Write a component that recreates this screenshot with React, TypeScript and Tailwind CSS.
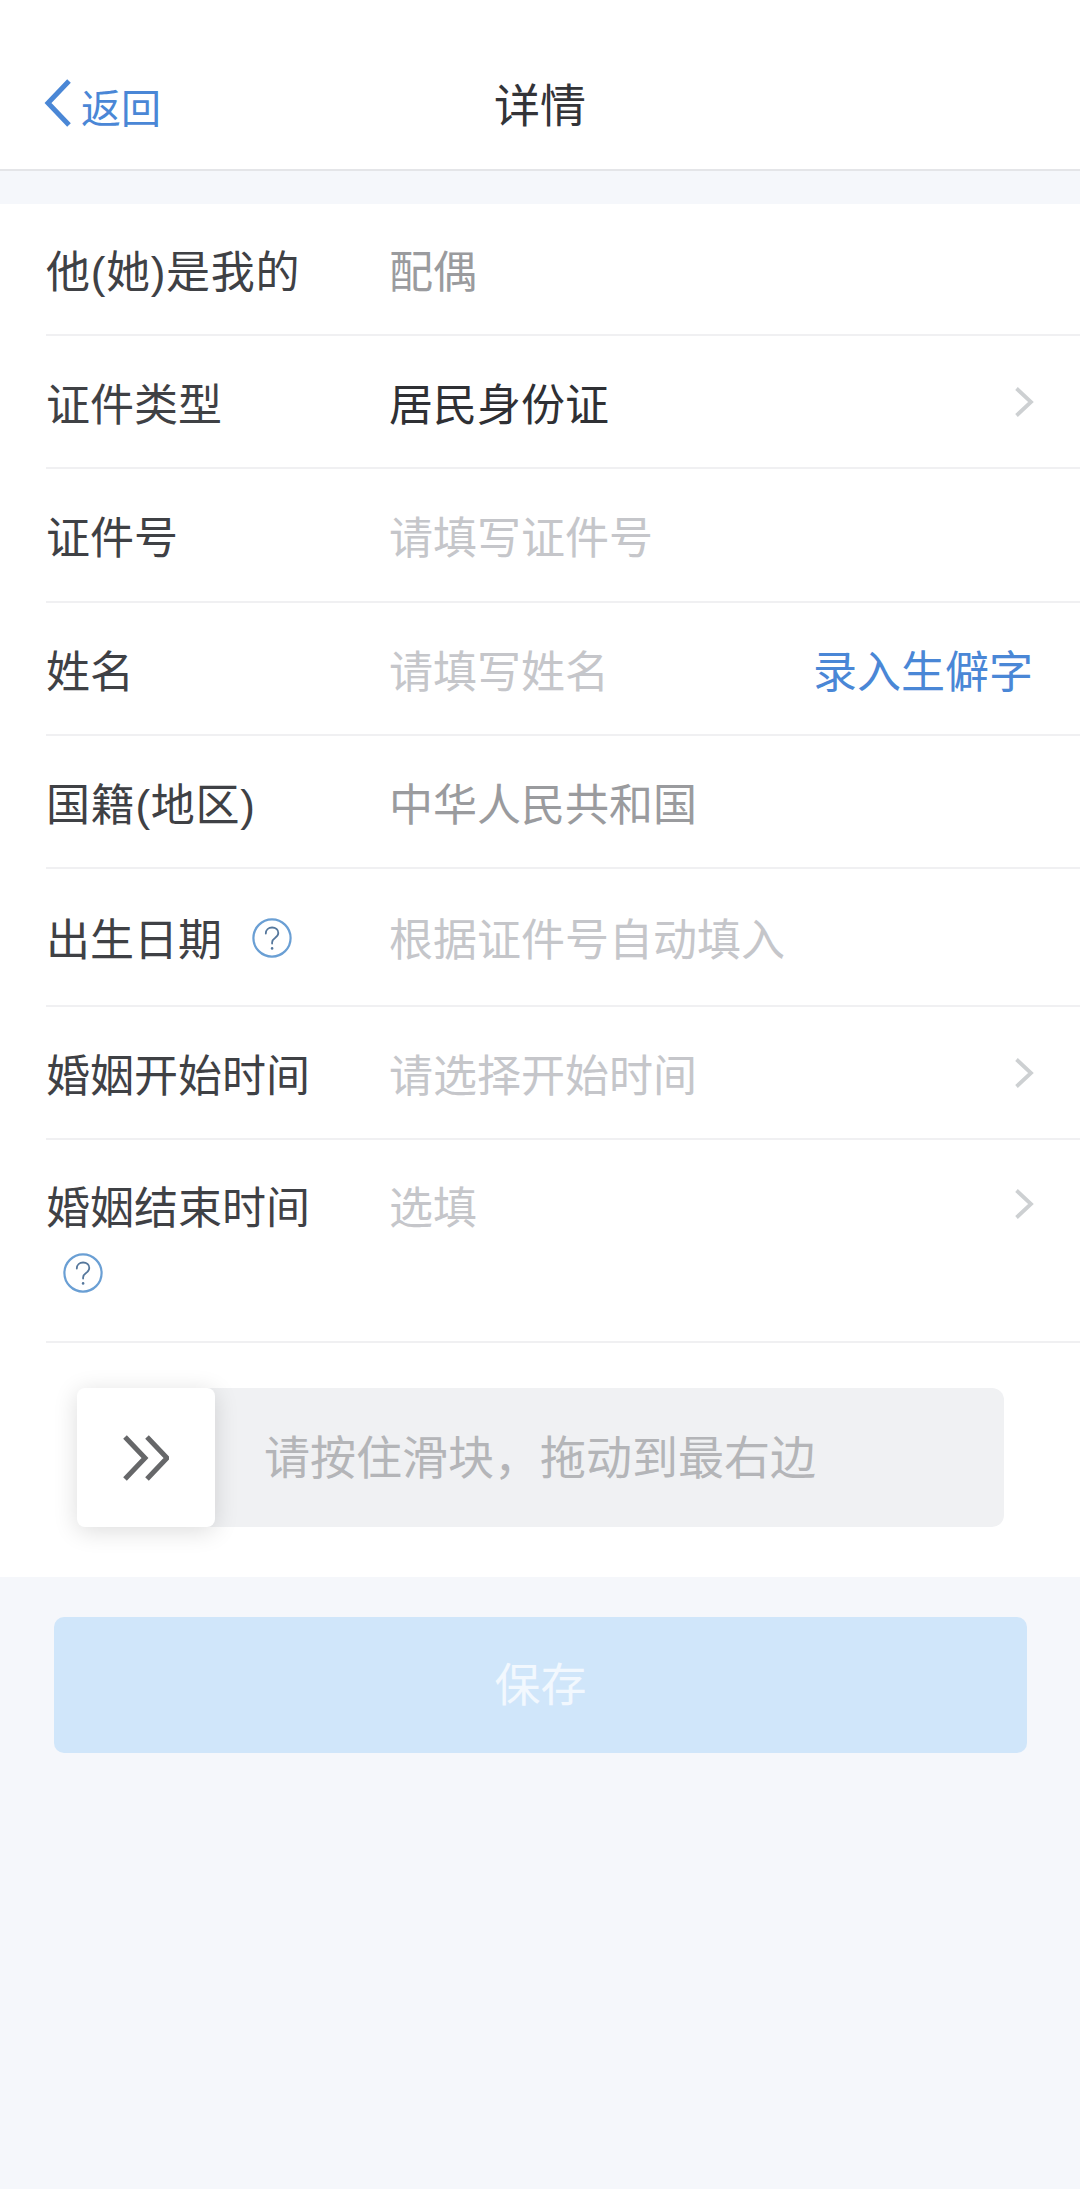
import React from "react";

const font = { fontFamily: '"Liberation Sans", "Noto Sans CJK SC", "Noto Sans", sans-serif' };

function Help({ className = "" }: { className?: string }) {
  return (
    <svg viewBox="0 0 40 40" className={`w-[40px] h-[40px] shrink-0 ${className}`} fill="none">
      <circle cx="20" cy="20" r="18.6" stroke="#6a9fd4" strokeWidth="2.2" />
      <path d="M13.8 15.5c0-3.6 2.8-6 6.3-6s6.2 2.3 6.2 5.5c0 2.5-1.5 3.7-3.3 5-1.9 1.3-2.9 2.4-2.9 4.6v1" stroke="#55779c" strokeWidth="1.8" strokeLinecap="round" />
      <circle cx="20.1" cy="30.4" r="1.3" fill="#55779c" />
    </svg>
  );
}

function Chevron() {
  return (
    <svg viewBox="0 0 20 32" className="w-[20px] h-[32px] shrink-0" fill="none">
      <path d="M2.5 2.5 17 16 2.5 29.5" stroke="#cdd0d2" strokeWidth="3.8" />
    </svg>
  );
}

function Row({
  label,
  value,
  valueClass,
  h,
  chevron,
  help,
  link,
  wide,
}: {
  label: string;
  value: string;
  valueClass: string;
  h: string;
  chevron?: boolean;
  help?: boolean;
  link?: string;
  wide?: boolean;
}) {
  return (
    <div className={`ml-[46px] flex items-center border-b-2 border-[#f0f0f2] ${h}`}>
      <div className="w-[343px] shrink-0 flex items-center text-[#3f4145]">
        <span className={`pt-[8px] ${wide ? "tracking-[0.7px]" : ""}`}>{label}</span>
        {help && <Help className="ml-[30px] mt-[2px]" />}
      </div>
      <div className={`flex-1 pt-[8px] ${valueClass}`}>{value}</div>
      {link && <span className="mr-[47px] pt-[8px] text-[#4a87d6]">{link}</span>}
      {chevron && (
        <span className="mr-[46px] flex">
          <Chevron />
        </span>
      )}
    </div>
  );
}

export default function App() {
  const placeholder = "text-[#c5c6ca]";
  const muted = "text-[#9a9b9e]";
  return (
    <div style={font} className="min-h-[2189px] w-[1080px] bg-[#f5f7fb] text-[44px] leading-[60px]">
      <header className="relative h-[171px] bg-white border-b-2 border-[#e4e5e8] flex items-end pb-[30px]">
        <div className="flex items-center pl-[44px] text-[#4a87d6] text-[40px] leading-[60px]">
          <svg viewBox="0 0 28 50" className="w-[28px] h-[50px] mr-[9px] mb-[11px]" fill="none">
            <path d="M25 3 4 25l21 22" stroke="#4a87d6" strokeWidth="5" />
          </svg>
          <span>返回</span>
        </div>
        <div className="absolute left-0 right-0 bottom-[33px] text-center text-[46px] leading-[60px] text-[#333438]">详情</div>
      </header>

      <main className="mt-[33px] bg-white">
        <Row h="h-[132px]" label="他(她)是我的" value="配偶" valueClass={muted} wide />
        <Row h="h-[133px]" label="证件类型" value="居民身份证" valueClass="text-[#2f3034]" chevron />
        <Row h="h-[134px]" label="证件号" value="请填写证件号" valueClass={placeholder} />
        <Row h="h-[133px]" label="姓名" value="请填写姓名" valueClass={placeholder} link="录入生僻字" />
        <Row h="h-[133px]" label="国籍(地区)" value="中华人民共和国" valueClass={muted} wide />
        <Row h="h-[138px]" label="出生日期" value="根据证件号自动填入" valueClass={placeholder} help />
        <Row h="h-[133px]" label="婚姻开始时间" value="请选择开始时间" valueClass={placeholder} chevron />

        <div className="ml-[46px] flex items-start border-b-2 border-[#f0f0f2] h-[203px] pt-[39px]">
          <div className="w-[343px] shrink-0 text-[#3f4145]">
            <div>婚姻结束时间</div>
            <Help className="ml-[17px] mt-[14px]" />
          </div>
          <div className={`flex-1 ${placeholder}`}>选填</div>
          <span className="mr-[46px] mt-[9px] flex">
            <Chevron />
          </span>
        </div>

        <div className="pt-[45px] pb-[50px] pl-[77px] pr-[76px]">
          <div className="flex h-[139px] items-center rounded-[12px] bg-[#f0f1f3]">
            <div className="w-[138px] h-full shrink-0 flex items-center justify-center rounded-[8px] bg-white shadow-[0_4px_24px_rgba(0,0,0,0.14)]">
              <svg viewBox="0 0 46 46" className="w-[46px] h-[46px]" fill="none">
                <path d="M2 2l20 21L2 44M24 2l20 21-20 21" stroke="#666769" strokeWidth="5" />
              </svg>
            </div>
            <span className="ml-[49px] text-[46px] text-[#b4b5b8]">请按住滑块，拖动到最右边</span>
          </div>
        </div>
      </main>

      <div className="mt-[40px] ml-[54px] mr-[53px] h-[136px] flex items-center justify-center rounded-[10px] bg-[#d0e6fa] text-[46px] text-[#f2f8fe]">
        保存
      </div>
    </div>
  );
}
